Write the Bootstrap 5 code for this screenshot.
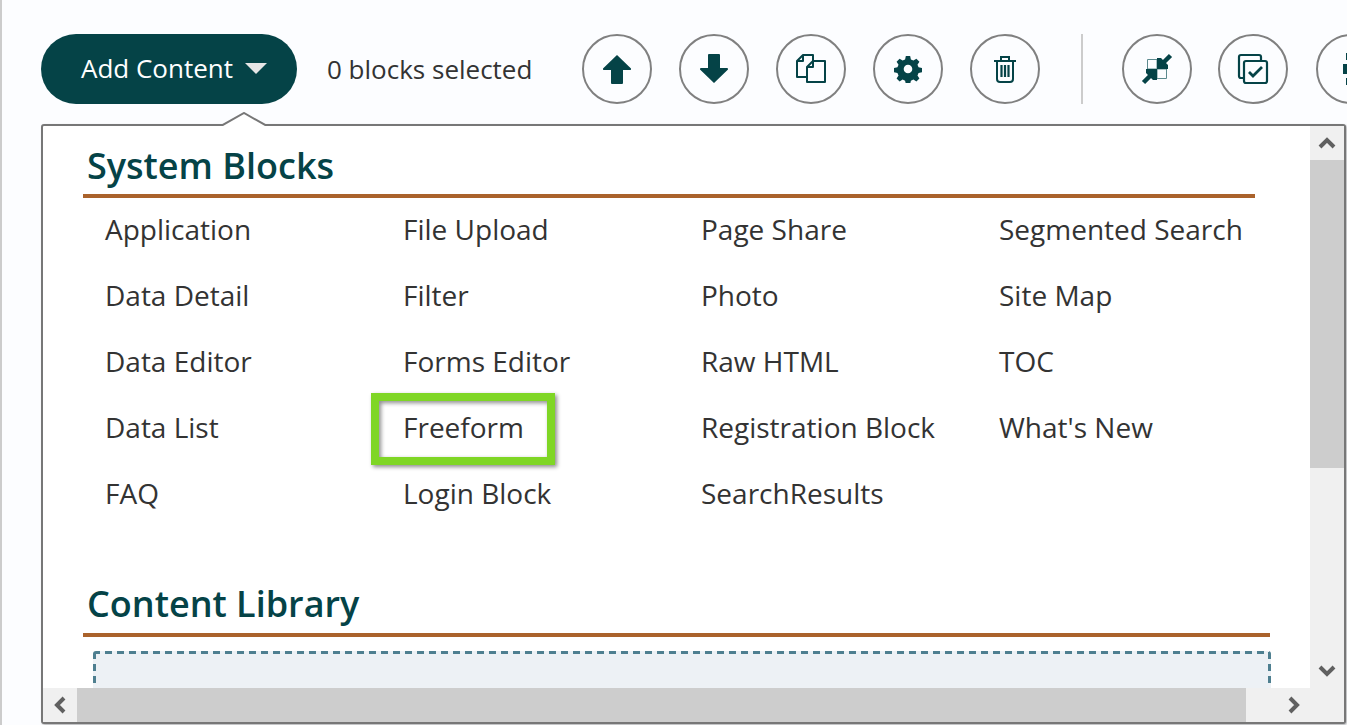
<!DOCTYPE html>
<html lang="en">
<head>
<meta charset="utf-8">
<title>Add Content</title>
<link href="https://cdn.jsdelivr.net/npm/bootstrap@5.3.0/dist/css/bootstrap.min.css" rel="stylesheet">
<style>
html,body{height:725px;overflow:hidden}
body{background:#fcfdff;font-family:"Open Sans","Noto Sans",sans-serif;color:#333;border-left:2px solid #ccc}
.page-wrap{padding:34px 0 0 39px;width:1345px;height:725px;overflow:hidden}
.tool-row{height:70px;white-space:nowrap}
.add-btn{width:256px;height:70px;border-radius:35px;background:#054347;color:#fff;font-size:26px;border:0;padding:0 0 2px 10px;display:flex;align-items:center;justify-content:center;gap:12px;flex:none}
.add-caret{width:0;height:0;border-left:11px solid transparent;border-right:11px solid transparent;border-top:11px solid #e6e6e6;display:block}
.sel-count{font-size:26px;margin-left:30px;width:255px;flex:none;color:#333}
.circ{width:70px;height:70px;border:2px solid #808080;border-radius:50%;background:#fcfdff;display:flex;align-items:center;justify-content:center;padding:0;flex:none;margin-right:27px}
.circ svg{display:block}
.circ-tight{margin-right:26px}
.circ-wide{margin-right:28px}
.circ-last{margin-right:0;justify-content:flex-start;padding-left:25px}
.v-sep{width:2px;height:70px;background:#ccc;flex:none;margin:0 39px 0 14px}
.panel-box{margin-top:20px;width:1305px;height:600px;border:2px solid #777;border-radius:3px;background:#fff;box-shadow:1px 1px 2px rgba(0,0,0,.3);position:relative;display:flex;flex-direction:column}
.panel-tip{position:absolute;left:178px;top:-14px;width:46px;height:14px;display:block}
.panel-main{flex:1 1 auto;min-height:0;display:flex}
.panel-scroll{flex:1 1 auto;overflow:hidden;padding-left:40px;position:relative}
.sec-title{font-size:36px;font-weight:600;color:#054347;line-height:45px;margin:0;padding-left:4px;padding-top:17px;height:68px}
.sec-rule{height:4px;background:#aa622b;width:1172px}
.sec-rule-wide{width:1187px}
.blk-cols{display:flex;margin-top:2px;height:373px;padding-left:22px}
.blk-col{width:298px;flex:none}
.blk-item{height:66px;line-height:58px;font-size:28px;color:#333;white-space:nowrap;position:relative}
.hl-box{position:absolute;left:-32px;top:-5px;width:184px;height:72px;border:8px solid #7fd625;box-shadow:2px 2px 4px rgba(0,0,0,.45),inset 2px 2px 4px rgba(0,0,0,.45)}
.lib-title{padding-top:8px;height:43px;line-height:45px;margin-bottom:17px}
.drop-zone{margin:14px 0 0 10px;width:1178px;height:80px;border-radius:3px;
 background-color:#edf1f5;
 background-image:repeating-linear-gradient(90deg,#4e7f90 0 7px,transparent 7px 12px),repeating-linear-gradient(0deg,#4e7f90 0 7px,transparent 7px 12px),repeating-linear-gradient(0deg,#4e7f90 0 7px,transparent 7px 12px);
 background-size:100% 3px,3px 100%,3px 100%;background-position:0 0,0 0,100% 0;background-repeat:no-repeat}
.sb-v{width:34px;flex:none;background:#f0f0f0;display:flex;flex-direction:column}
.sb-btn{height:34px;display:flex;align-items:center;justify-content:center;background:#f0f0f0;flex:none}
.sb-thumb-v{height:308px;background:#cdcdcd;flex:none}
.sb-gap-v{flex:1 1 auto}
.sb-h{height:34px;flex:none;display:flex;background:#f0f0f0}
.sb-hbtn{width:34px;display:flex;align-items:center;justify-content:center;flex:none}
.sb-thumb-h{width:1169px;background:#cdcdcd;flex:none}
.sb-gap-h{flex:1 1 auto}
.sb-corner{width:33px;flex:none}
</style>
</head>
<body>
<div class="page-wrap">
  <div class="tool-row d-flex align-items-center">
    <button type="button" class="add-btn">Add Content<span class="add-caret"></span></button>
    <span class="sel-count">0 blocks selected</span>
    <button type="button" class="circ" aria-label="Move up"><svg width="30" height="30" viewBox="0 0 30 30"><path d="M15 1 L29 14.500 Q29.500 16 28 16 H21 V29 Q21 30 20 30 H10 Q9 30 9 29 V16 H2 Q.5 16 1 14.500Z" fill="#054347"/></svg></button>
    <button type="button" class="circ" aria-label="Move down"><svg width="30" height="30" viewBox="0 0 30 30"><path d="M15 29 L29 15.500 Q29.500 14 28 14 H21 V1 Q21 0 20 0 H10 Q9 0 9 1 V14 H2 Q.5 14 1 15.500Z" fill="#054347"/></svg></button>
    <button type="button" class="circ" aria-label="Copy"><svg width="32" height="32" viewBox="0 0 32 32" fill="none" stroke="#054347" stroke-width="2"><path d="M8 2 H18 V10 M11 24 H2 V8 L8 2 V8 H2" stroke-linejoin="round"/><path d="M18 8 H30 V29 H12 V14 Z M18 8 V14 H12" fill="#fcfdff" stroke-linejoin="round"/></svg></button>
    <button type="button" class="circ" aria-label="Settings"><svg width="28" height="28" viewBox="0 0 26 26"><path fill="#054347" fill-rule="evenodd" d="M11 1h4l.7 3.200 2.300 1 2.800-1.800 2.800 2.800-1.800 2.800 1 2.300 3.200.7v4l-3.200.7-1 2.300 1.800 2.800-2.800 2.800-2.800-1.800-2.300 1-.7 3.200h-4l-.7-3.200-2.300-1-2.800 1.800-2.800-2.800 1.800-2.800-1-2.300-3.200-.7v-4l3.200-.7 1-2.300-1.800-2.800 2.800-2.800 2.800 1.800 2.300-1zM13 9a4 4 0 1 0 0 8 4 4 0 0 0 0-8z"/></svg></button>
    <button type="button" class="circ" aria-label="Delete"><svg width="24" height="28" viewBox="0 0 24 28" fill="none" stroke="#054347" stroke-width="2"><path d="M1 6 H23 M8 6 V2 H16 V6 M4 6 V24 Q4 27 7 27 H17 Q20 27 20 24 V6"/><path d="M8.500 10 V22 M12 10 V22 M15.500 10 V22" stroke-width="2.200"/></svg></button>
    <span class="v-sep"></span>
    <button type="button" class="circ circ-tight" aria-label="Collapse"><svg width="32" height="32" viewBox="0 0 32 32"><path d="M6.500 6.500 H16 V16 H6.500Z M16 16 H25.500 V25.500 H16Z" fill="none" stroke="#5c8a8e" stroke-width="1"/><path fill="#054347" d="M16 5 H20 L27 12 V16 H16Z M16 27 H12 L5 20 V16 H16Z"/><path d="M21 11 L29.500 2.500 M11 21 L2.500 29.500" stroke="#054347" stroke-width="4.500" fill="none"/></svg></button>
    <button type="button" class="circ circ-wide" aria-label="Select all"><svg width="32" height="32" viewBox="0 0 32 32" fill="none" stroke="#054347" stroke-width="2.200"><path d="M7 25 H4 Q2 25 2 23 V4 Q2 2 4 2 H22 Q24 2 24 4 V7"/><rect x="7" y="8" width="23" height="22" rx="2"/><path d="M12 19 L16 23 L25 14" stroke-width="2.800"/></svg></button>
    <button type="button" class="circ circ-last" aria-label="Structure"><svg width="14" height="32" viewBox="0 0 14 32"><path fill="#054347" d="M3 0h5v7H3zM0 11h8v10H0zM3 25h5v7H3z"/></svg></button>
  </div>
  <div class="panel-box">
    <svg class="panel-tip" viewBox="0 0 46 14"><path d="M0 14 L23 1 L46 14" fill="#fff" stroke="#777" stroke-width="2"/></svg>
    <div class="panel-main">
      <div class="panel-scroll">
        <h2 class="sec-title">System Blocks</h2>
        <div class="sec-rule"></div>
        <div class="blk-cols">
          <div class="blk-col">
            <div class="blk-item">Application</div>
            <div class="blk-item">Data Detail</div>
            <div class="blk-item">Data Editor</div>
            <div class="blk-item">Data List</div>
            <div class="blk-item">FAQ</div>
          </div>
          <div class="blk-col">
            <div class="blk-item">File Upload</div>
            <div class="blk-item">Filter</div>
            <div class="blk-item">Forms Editor</div>
            <div class="blk-item">Freeform<span class="hl-box"></span></div>
            <div class="blk-item">Login Block</div>
          </div>
          <div class="blk-col">
            <div class="blk-item">Page Share</div>
            <div class="blk-item">Photo</div>
            <div class="blk-item">Raw HTML</div>
            <div class="blk-item">Registration Block</div>
            <div class="blk-item">SearchResults</div>
          </div>
          <div class="blk-col">
            <div class="blk-item">Segmented Search</div>
            <div class="blk-item">Site Map</div>
            <div class="blk-item">TOC</div>
            <div class="blk-item">What's New</div>
          </div>
        </div>
        <h2 class="sec-title lib-title">Content Library</h2>
        <div class="sec-rule sec-rule-wide"></div>
        <div class="drop-zone"></div>
      </div>
      <div class="sb-v">
        <div class="sb-btn"><svg width="18" height="12" viewBox="0 0 18 12"><path d="M2 10 L9 3 L16 10" fill="none" stroke="#606060" stroke-width="4"/></svg></div>
        <div class="sb-thumb-v"></div>
        <div class="sb-gap-v"></div>
        <div class="sb-btn"><svg width="18" height="12" viewBox="0 0 18 12"><path d="M2 2 L9 9 L16 2" fill="none" stroke="#606060" stroke-width="4"/></svg></div>
      </div>
    </div>
    <div class="sb-h">
      <div class="sb-hbtn"><svg width="12" height="18" viewBox="0 0 12 18"><path d="M10 2 L3 9 L10 16" fill="none" stroke="#606060" stroke-width="4"/></svg></div>
      <div class="sb-thumb-h"></div>
      <div class="sb-gap-h"></div>
      <div class="sb-hbtn"><svg width="12" height="18" viewBox="0 0 12 18"><path d="M2 2 L9 9 L2 16" fill="none" stroke="#606060" stroke-width="4"/></svg></div>
      <div class="sb-corner"></div>
    </div>
  </div>
</div>
<script src="https://cdn.jsdelivr.net/npm/bootstrap@5.3.0/dist/js/bootstrap.bundle.min.js"></script>
</body>
</html>
